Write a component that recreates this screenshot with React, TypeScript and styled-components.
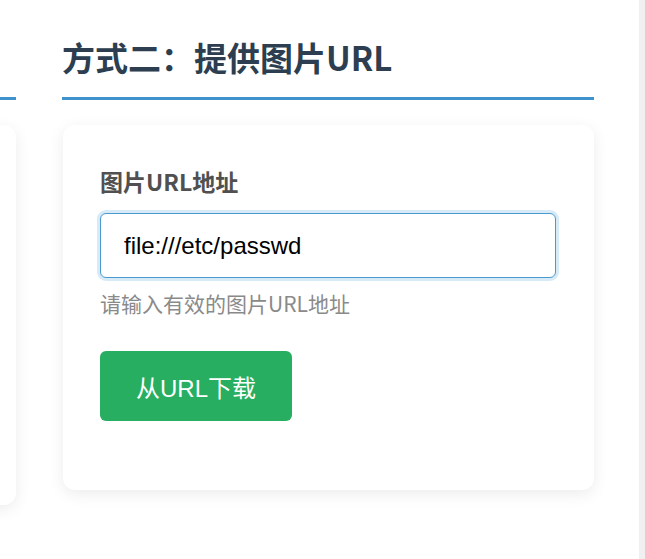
import React from "react";
import styled, { createGlobalStyle } from "styled-components";

const GlobalStyle = createGlobalStyle`
  html, body {
    margin: 0;
    padding: 0;
    background: #fff;
  }
  body {
    font-family: "Noto Sans CJK SC", "Noto Sans", sans-serif;
  }
  * {
    box-sizing: border-box;
  }
`;

const Page = styled.div`
  display: flex;
  width: 645px;
  height: 559px;
  overflow: hidden;
  background: #fff;
`;

const Main = styled.main`
  flex: 1;
  overflow: hidden;
  padding-top: 36px;
`;

const ScrollTrack = styled.div`
  width: 6px;
  background: #f0f0f1;
`;

const Columns = styled.div`
  display: grid;
  grid-template-columns: 532px 532px;
  column-gap: 46px;
  margin-left: -516px;
  align-items: start;
`;

const Section = styled.section`
  display: flex;
  flex-direction: column;
`;

const Heading = styled.h2`
  margin: 0 0 25px;
  padding-bottom: 19px;
  border-bottom: 3px solid #3f93cc;
  font-size: 33px;
  line-height: 42px;
  font-weight: 700;
  color: #2c3e50;
  white-space: nowrap;
`;

const Card = styled.div<{ $minHeight?: number }>`
  margin-left: 1px;
  background: #fff;
  border-radius: 12px;
  box-shadow: 0 4px 16px rgba(0, 0, 0, 0.08);
  padding: 40px 37px 69px;
  min-height: ${(p) => (p.$minHeight ? `${p.$minHeight}px` : "auto")};
  display: flex;
  flex-direction: column;
`;

const Label = styled.label`
  font-size: 23px;
  line-height: 33px;
  font-weight: 700;
  color: #505050;
  margin-bottom: 15px;
`;

const UrlInput = styled.input`
  width: 456px;
  height: 65px;
  padding: 0 23px;
  border: 1px solid #4a9ad0;
  border-radius: 6px;
  box-shadow: 0 0 0 3px rgba(52, 152, 219, 0.2);
  outline: none;
  font-family: "Liberation Sans", Arial, sans-serif;
  font-size: 24px;
  color: #000;
  background: #fff;
`;

const Help = styled.div`
  margin-top: 10px;
  font-size: 21px;
  line-height: 30px;
  color: #8a8a8a;
`;

const Button = styled.button`
  margin-top: 33px;
  width: 192px;
  height: 70px;
  border: none;
  border-radius: 6px;
  background: #27ae60;
  color: #fff;
  font-family: "Liberation Sans", "Noto Sans CJK SC", sans-serif;
  font-size: 24px;
  cursor: pointer;
`;

export default function App() {
  return (
    <>
      <GlobalStyle />
      <Page>
        <Main>
          <Columns>
            <Section>
              <Heading aria-hidden="true">&nbsp;</Heading>
              <Card $minHeight={380} />
            </Section>
            <Section>
              <Heading>方式二：提供图片URL</Heading>
              <Card>
                <Label htmlFor="image-url">图片URL地址</Label>
                <UrlInput id="image-url" type="text" defaultValue="file:///etc/passwd" />
                <Help>请输入有效的图片URL地址</Help>
                <Button>从URL下载</Button>
              </Card>
            </Section>
          </Columns>
        </Main>
        <ScrollTrack />
      </Page>
    </>
  );
}
